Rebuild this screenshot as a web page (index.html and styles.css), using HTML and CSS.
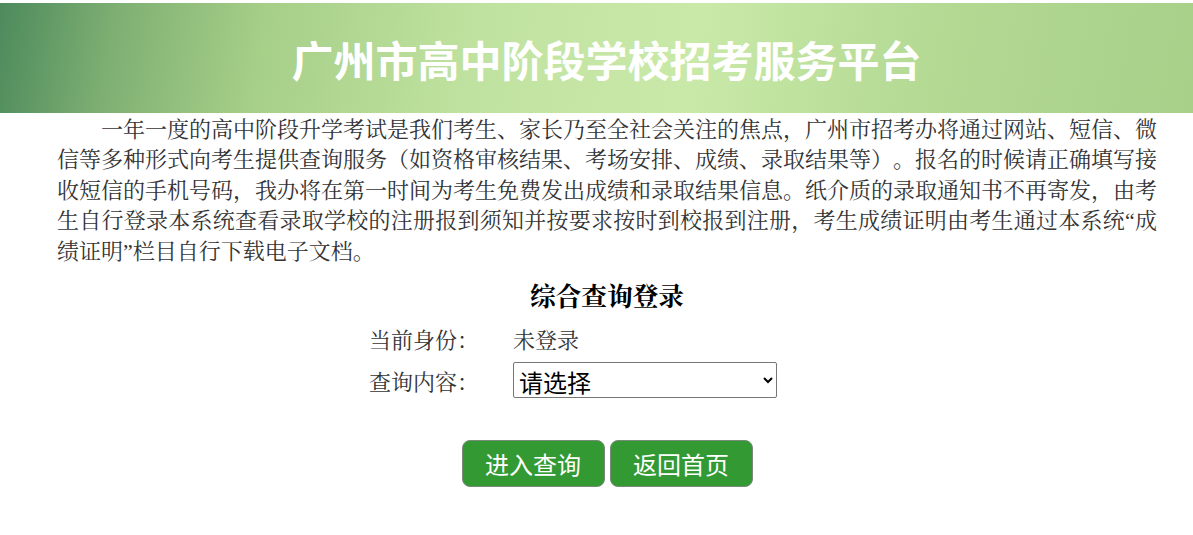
FILE: index.html
```html
<!DOCTYPE html>
<html lang="zh-CN">
<head>
    <meta charset="UTF-8">
    <meta name="viewport" content="width=device-width, initial-scale=1.0">
    <title>广州市高中阶段学校招考服务平台</title>
    <link rel="stylesheet" href="styles.css">
</head>
<body>
<div class="banner">
    <h1>广州市高中阶段学校招考服务平台</h1>
</div>
<div class="main">
    <p class="intro">一年一度的高中阶段升学考试是我们考生、家长乃至全社会关注的焦点，广州市招考办将通过网站、短信、微信等多种形式向考生提供查询服务（如资格审核结果、考场安排、成绩、录取结果等）。报名的时候请正确填写接收短信的手机号码，我办将在第一时间为考生免费发出成绩和录取结果信息。纸介质的录取通知书不再寄发，由考生自行登录本系统查看录取学校的注册报到须知并按要求按时到校报到注册，考生成绩证明由考生通过本系统“成绩证明”栏目自行下载电子文档。</p>
    <h3 class="login-title">综合查询登录</h3>
    <div class="login-form">
        <span class="label">当前身份：</span>
        <span class="value">未登录</span>
        <span class="label">查询内容：</span>
        <select class="query-select">
            <option>请选择</option>
            <option>成绩查询</option>
            <option>录取结果查询</option>
        </select>
    </div>
    <div class="button-row">
        <button class="btn">进入查询</button>
        <button class="btn">返回首页</button>
    </div>
</div>
</body>
</html>
```

FILE: styles.css
```css
* {
    box-sizing: border-box;
    margin: 0;
    padding: 0;
}

body {
    background-color: #fff;
    font-family: "Liberation Serif", "Noto Serif CJK SC", "Noto Sans CJK SC", serif;
    color: #333;
    padding-top: 3px;
    text-spacing-trim: space-all;
}

.banner {
    height: 110px;
    display: flex;
    align-items: center;
    justify-content: center;
    background: linear-gradient(100deg, #4d8a5c 0%, #7fb073 10%, #a6cf88 22%, #c0e2a0 40%, #c9e9a8 58%, #b3d993 78%, #a8d089 100%);
}

.banner h1 {
    font-family: "Noto Sans CJK SC", sans-serif;
    font-size: 42px;
    font-weight: bold;
    color: #fff;
    margin-left: 20px;
}

.main {
    width: 1100px;
    margin-left: 57px;
}

.intro {
    font-size: 22px;
    line-height: 30.4px;
    text-indent: 2em;
    text-align: justify;
    margin-top: 2px;
}

.login-title {
    font-size: 25.7px;
    line-height: 30px;
    font-weight: bold;
    text-align: center;
    color: #000;
    margin-top: 16px;
}

.login-form {
    display: grid;
    grid-template-columns: 144px 264px;
    grid-template-rows: 30px 36px;
    row-gap: 9px;
    align-items: center;
    margin-top: 10px;
    padding-left: 312px;
    font-size: 22px;
}

.query-select {
    width: 264px;
    height: 36px;
    font-family: "Noto Sans CJK SC", sans-serif;
    font-size: 24px;
    color: #000;
    border: 1px solid #767676;
    border-radius: 2px;
    background-color: #fff;
    padding-left: 1px;
}

.button-row {
    display: flex;
    justify-content: center;
    gap: 5px;
    margin-top: 42px;
}

.btn {
    width: 143px;
    height: 47px;
    font-family: "Noto Sans CJK SC", sans-serif;
    font-size: 24px;
    color: #fff;
    background-color: #339933;
    border: 1px solid #7a8a7a;
    border-radius: 8px;
    cursor: pointer;
}
```
